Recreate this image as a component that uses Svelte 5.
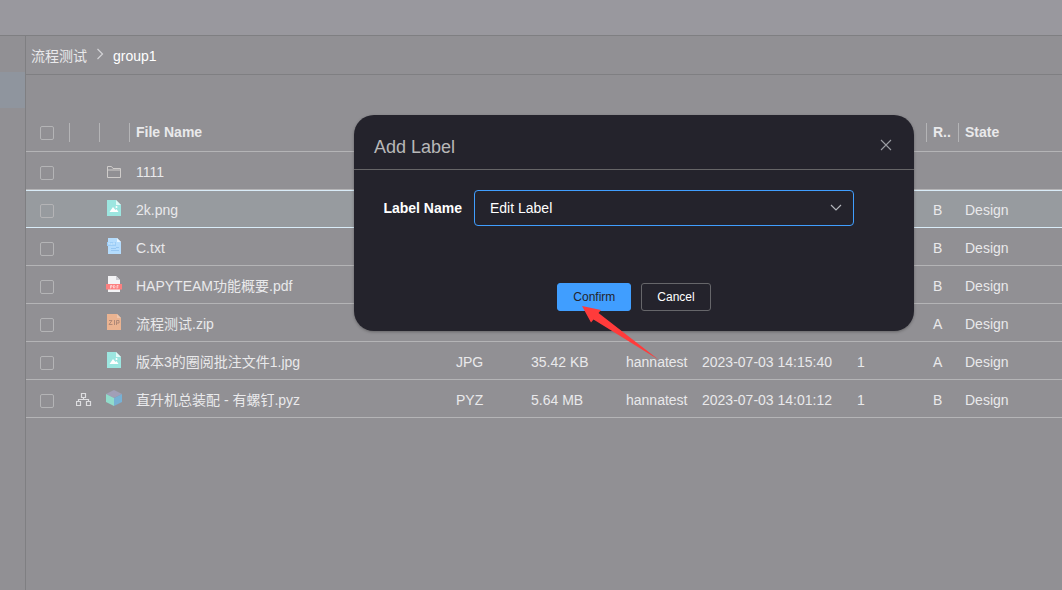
<script>
  const files = [
    { icon: 'folder', name: '1111' },
    { icon: 'image', name: '2k.png', rev: 'B', state: 'Design', selected: true },
    { icon: 'text', name: 'C.txt', rev: 'B', state: 'Design' },
    { icon: 'pdf', name: 'HAPYTEAM功能概要.pdf', rev: 'B', state: 'Design' },
    { icon: 'zip', name: '流程测试.zip', rev: 'A', state: 'Design' },
    { icon: 'image', name: '版本3的圈阅批注文件1.jpg', type: 'JPG', size: '35.42 KB', owner: 'hannatest', date: '2023-07-03 14:15:40', version: '1', rev: 'A', state: 'Design' },
    { icon: 'cube', name: '直升机总装配 - 有螺钉.pyz', type: 'PYZ', size: '5.64 MB', owner: 'hannatest', date: '2023-07-03 14:01:12', version: '1', rev: 'B', state: 'Design', tree: true }
  ];
</script>

{#snippet fileIcon(kind)}
  <svg class="icon" viewBox="0 0 16 16" aria-hidden="true">
    {#if kind === 'folder'}
      <path d="M1.500 15.500v-11h4l1.500 2h7.500v9z M1.500 8h13" fill="none" stroke="#cfccca" />
    {:else if kind === 'image'}
      <path d="M1 0h9l5 5v11H1z" fill="#9ce6e0" />
      <path d="M10 0v5h5z" fill="#e2faf7" />
      <path d="M3.500 12l3.500-5 2.500 3 1-1 2 3z" fill="#fff" />
      <circle cx="10.500" cy="7" r="1" fill="#fff" />
    {:else if kind === 'text'}
      <path d="M2 0h9l4 4v12H2z" fill="#b4dcfd" />
      <path d="M11 0v4h4z" fill="#e5f4ff" />
      <path d="M1 4h9v4H1z" fill="#9ccdf7" />
      <path d="M2 5h2M3 5v2M4.500 5l2 2M6.500 5l-2 2M7 5h2M8 5v2" fill="none" stroke="#d9efff" stroke-width=".7" />
      <path d="M10 9.500h3M5 10.500h5M5 12.500h8" fill="none" stroke="#8fc2f0" stroke-width=".8" />
    {:else if kind === 'pdf'}
      <path d="M2 0h8l4 4v12H2z" fill="#f3f3f5" />
      <path d="M10 0v4h4z" fill="#ceced4" />
      <path d="M0 8h16v5.500H0z" fill="#fc8080" />
      <path d="M4.500 12.500v-3H6v1.500H4.500M7.500 9.500v2.500h.500l1-.500V10l-.500-.500zM11 12.500v-3h1.500M11 11h1.500" fill="none" stroke="#ffe6e6" stroke-width=".7" />
    {:else if kind === 'zip'}
      <path d="M1 0h10l4 4v12H1z" fill="#eab391" />
      <path d="M11 0v4h4z" fill="#f0c5ab" />
      <path d="M3 6.500h3l-3 4h3.500M8.500 6v5M10.500 11V6.500h2.500v2.500h-2.500" fill="none" stroke="#a98574" stroke-width=".9" />
    {:else}
      <path d="M8 0l8 4-8 4-8-4z" fill="#a19fb7" />
      <path d="M0 4l8 4v8l-8-4z" fill="#91dccb" />
      <path d="M16 4L8 8v8l8-4z" fill="#77b1d5" />
    {/if}
  </svg>
{/snippet}

<div class="page">
  <header class="topbar"></header>
  <div class="body">
    <aside class="sidebar"><div class="active"></div></aside>
    <main>
      <nav class="crumbs" aria-label="Breadcrumb">
        <a href="#root">流程测试</a>
        <svg width="8" height="12" viewBox="0 0 8 12" aria-hidden="true"><path d="M1.500 1l5 5-5 5" fill="none" stroke="#d3d3d6" stroke-width="1.2" /></svg>
        <span class="current">group1</span>
      </nav>
      <table>
        <colgroup>
          <col class="c-check" /><col class="c-icon" /><col class="c-icon" /><col class="c-name" />
          <col class="c-type" /><col class="c-size" /><col class="c-owner" /><col class="c-date" />
          <col class="c-version" /><col class="c-rev" /><col />
        </colgroup>
        <thead>
          <tr>
            <th class="check"><input type="checkbox" aria-label="Select all" /></th>
            <th></th>
            <th></th>
            <th>File Name</th>
            <th></th><th></th><th></th><th></th><th></th>
            <th>R..</th>
            <th>State</th>
          </tr>
        </thead>
        <tbody>
          {#each files as f}
            <tr class:selected={f.selected}>
              <td class="check"><input type="checkbox" aria-label={f.name} /></td>
              <td class="glyph">
                {#if f.tree}
                  <svg class="icon" viewBox="0 0 16 16" aria-hidden="true">
                    <path d="M5.500 3.500h4v4h-4zM.500 11.500h4v4h-4zM10.500 11.500h4v4h-4zM7.500 7.500v2M2.500 11.500v-2h10v2" fill="none" stroke="#dddde0" stroke-width="1.200" />
                  </svg>
                {/if}
              </td>
              <td class="glyph">{@render fileIcon(f.icon)}</td>
              <td>{f.name}</td>
              <td>{f.type ?? ''}</td>
              <td>{f.size ?? ''}</td>
              <td>{f.owner ?? ''}</td>
              <td>{f.date ?? ''}</td>
              <td>{f.version ?? ''}</td>
              <td>{f.rev ?? ''}</td>
              <td>{f.state ?? ''}</td>
            </tr>
          {/each}
        </tbody>
      </table>
    </main>
  </div>

  <div class="overlay">
    <form class="dialog" role="dialog" aria-labelledby="title">
      <div class="head">
        <h2 id="title">Add Label</h2>
        <button class="close" type="button" aria-label="Close">
          <svg width="12" height="12" viewBox="0 0 12 12"><path d="M1 1l10 10M11 1L1 11" fill="none" stroke="#9b9da3" stroke-width="1.100" /></svg>
        </button>
      </div>
      <div class="field">
        <label for="label-name">Label Name</label>
        <div class="select">
          <select id="label-name"><option>Edit Label</option></select>
          <svg width="12" height="8" viewBox="0 0 12 8" aria-hidden="true"><path d="M1 1l5 5 5-5" fill="none" stroke="#b4b6bc" stroke-width="1.200" /></svg>
        </div>
      </div>
      <div class="actions">
        <button class="btn primary" type="button">Confirm</button>
        <button class="btn" type="button">Cancel</button>
        <svg class="pointer" width="78" height="55" viewBox="0 0 78 55" aria-hidden="true">
          <path d="M0 0l19 4-2.500 3L77 54 11.500 13.500 9 16.500z" fill="#ff3b3b" />
        </svg>
      </div>
    </form>
  </div>
</div>

<style>
  :global(body) {
    margin: 0;
  }
  .page {
    position: relative;
    display: flex;
    flex-direction: column;
    min-height: 100vh;
    background: #919094;
    color: #e9e9eb;
    font: 14px/20px "Liberation Sans", "Noto Sans CJK SC", sans-serif;
  }
  .topbar {
    height: 35px;
    background: #99989e;
    border-bottom: 1px solid #7f7f82;
  }
  .body {
    display: flex;
    flex: 1;
  }
  .sidebar {
    width: 25px;
    padding-top: 36px;
    border-right: 1px solid #7f7f82;
  }
  .active {
    height: 36px;
    background: #8f959e;
  }
  main {
    flex: 1;
    min-width: 0;
  }
  .crumbs {
    display: flex;
    align-items: center;
    box-sizing: border-box;
    height: 39px;
    gap: 9px;
    padding: 2px 0 0 5px;
    border-bottom: 1px solid #7f7f82;
  }
  .crumbs svg {
    margin-bottom: 4px;
  }
  .crumbs a {
    color: inherit;
    text-decoration: none;
  }
  .current {
    color: #fff;
  }
  table {
    width: 100%;
    margin-top: 39px;
    table-layout: fixed;
    border-collapse: separate;
    border-spacing: 0;
  }
  .c-check { width: 44px; }
  .c-icon { width: 30px; }
  .c-name { width: 320px; }
  .c-type { width: 75px; }
  .c-size { width: 95px; }
  .c-owner,
  .c-version { width: 76px; }
  .c-date { width: 155px; }
  .c-rev { width: 32px; }
  th,
  td {
    box-sizing: border-box;
    height: 38px;
    padding: 3px 0 0 6px;
    border-bottom: 1px solid #b4b4b6;
    text-align: left;
    white-space: nowrap;
    vertical-align: middle;
  }
  th {
    padding: 0 0 2px 6px;
    background: linear-gradient(#b4b4b6, #b4b4b6) right 9px / 1px 19px no-repeat;
  }
  th:last-child {
    background: none;
  }
  td.check {
    padding: 5px 0 0 14px;
  }
  th.check {
    padding: 1px 0 0 14px;
  }
  input {
    display: block;
    appearance: none;
    box-sizing: border-box;
    width: 14px;
    height: 14px;
    margin: 0;
    border: 1px solid #b4b4b6;
    border-radius: 2px;
  }
  td.glyph {
    padding: 0 0 1px 6px;
  }
  .icon {
    display: block;
    width: 16px;
    height: 16px;
  }
  .selected td {
    background: #979b9f;
    box-shadow: inset 0 1px #d9ecf8;
    border-bottom-color: #d9ecf8;
  }
  .overlay {
    position: absolute;
    inset: 0;
    display: flex;
    justify-content: center;
    align-items: flex-start;
    padding: 115px 0 0 206px;
  }
  .dialog {
    width: 560px;
    border-radius: 20px;
    background: #24232c;
    box-shadow: 0 1px 3px #0000004d;
  }
  .head {
    display: flex;
    align-items: center;
    justify-content: space-between;
    height: 54px;
    padding: 0 20px;
    border-bottom: 1px solid #666567;
  }
  h2 {
    margin: 10px 0 0;
    color: #b8b8b8;
    font-size: 18px;
    font-weight: 400;
    line-height: 24px;
  }
  button {
    cursor: pointer;
    font: inherit;
  }
  .close {
    display: flex;
    padding: 2px;
    margin-top: 6px;
    border: 0;
    background: none;
  }
  .field {
    display: flex;
    align-items: center;
    padding: 20px 60px 0 20px;
  }
  label {
    width: 88px;
    margin-right: 12px;
    color: #fff;
    font-weight: 700;
    text-align: right;
  }
  .select {
    position: relative;
    flex: 1;
  }
  select {
    display: block;
    appearance: none;
    width: 100%;
    height: 36px;
    padding: 0 30px 0 15px;
    border: 1px solid #409eff;
    border-radius: 4px;
    outline: 0;
    background: transparent;
    color: #fff;
    font: inherit;
  }
  .select svg {
    position: absolute;
    top: 14px;
    right: 12px;
    pointer-events: none;
  }
  .actions {
    position: relative;
    display: flex;
    justify-content: center;
    gap: 10px;
    padding: 57px 0 20px;
  }
  .btn {
    height: 28px;
    padding: 0 15px;
    border: 1px solid #66666a;
    border-radius: 3px;
    background: transparent;
    color: #fff;
    font-size: 12px;
  }
  .primary {
    border-color: #409eff;
    background: #409eff;
    color: #24232c;
  }
  .pointer {
    position: absolute;
    top: 80px;
    left: 228px;
    pointer-events: none;
  }
</style>
